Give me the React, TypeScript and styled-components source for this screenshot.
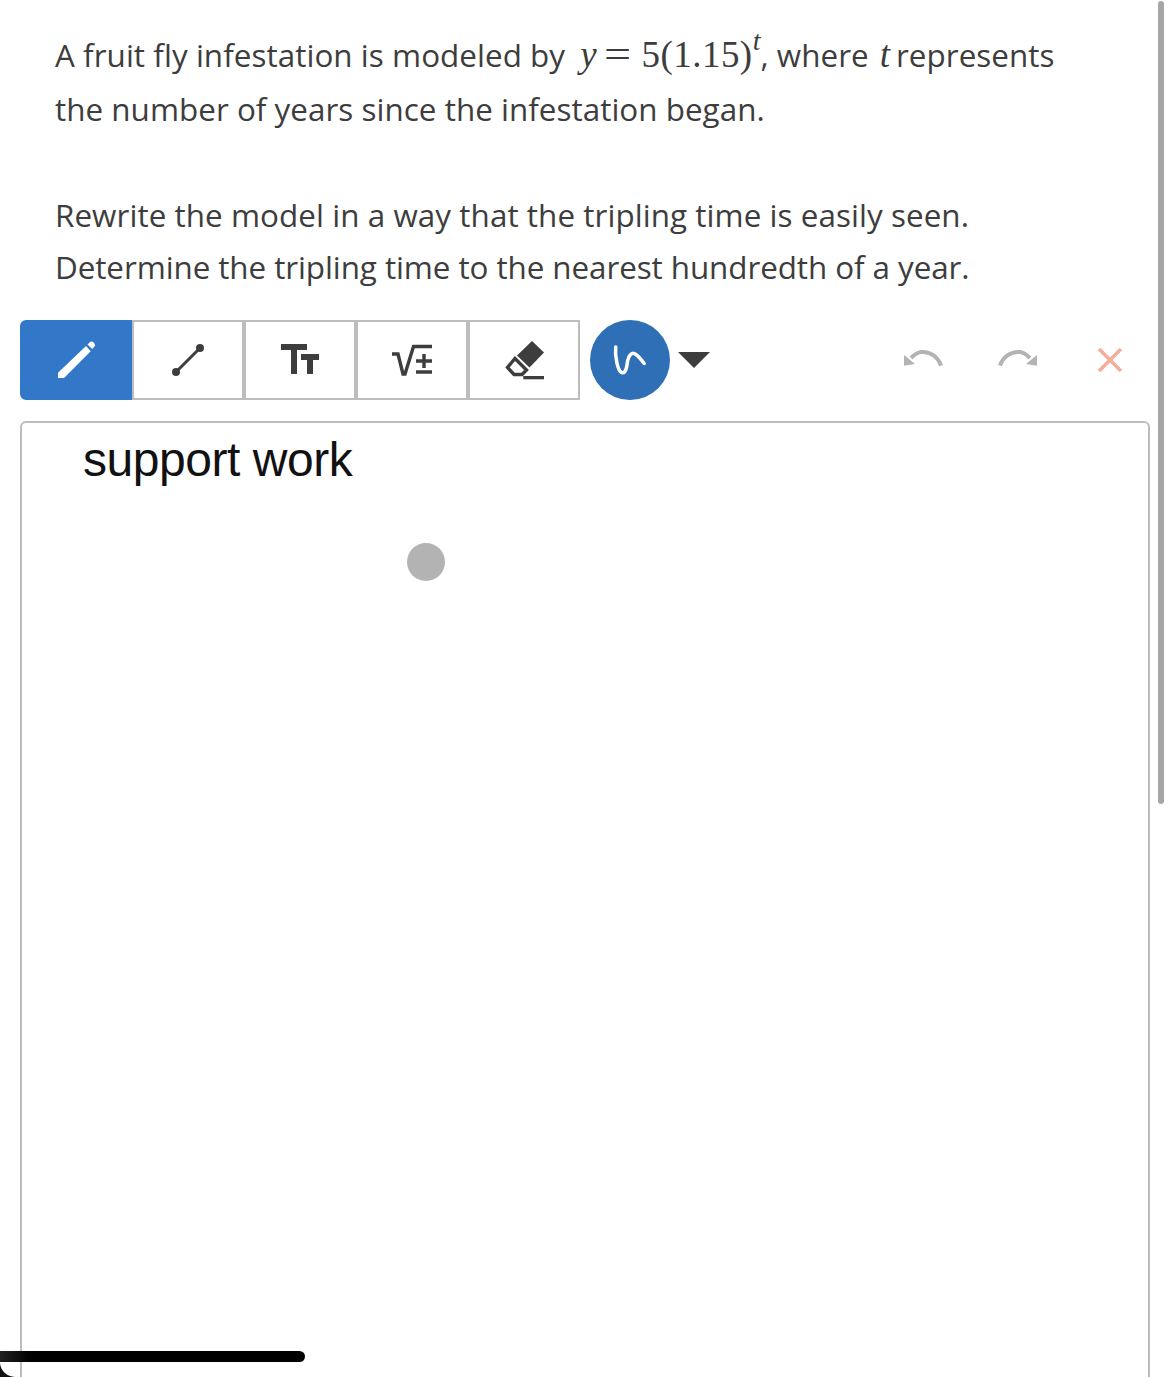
import React from "react";
import styled, { createGlobalStyle } from "styled-components";

const GlobalStyle = createGlobalStyle`
  html, body {
    margin: 0;
    padding: 0;
    background: #fff;
  }
`;

export default function App() {
  return (
    <Page>
      <GlobalStyle />
      <Question>
        <TextLine $height={54} $tracking={0.05}>
          A fruit fly infestation is modeled by
          <MathText $gapLeft={15}>
            <i>y</i>
            <MathEquals>=</MathEquals>
            <MathNumber>5(1.15)</MathNumber>
            <Sup>t</Sup>
          </MathText>
          , where
          <MathText $gapLeft={11}>
            <i>t</i>
          </MathText>
          <AfterMath>represents</AfterMath>
        </TextLine>
        <TextLine $height={54} $tracking={0.03}>
          the number of years since the infestation began.
        </TextLine>
      </Question>
      <Prompt>
        <TextLine $height={52} $tracking={0.06}>
          Rewrite the model in a way that the tripling time is easily seen.
        </TextLine>
        <TextLine $height={52} $tracking={-0.08}>
          Determine the tripling time to the nearest hundredth of a year.
        </TextLine>
      </Prompt>

      <Toolbar>
        <ToolGroup>
          <ToolButton $active>
            <ToolIcon viewBox="0 0 40 40">
              <path d="M2 32.700V38h6l26.700-26.700L30 6z" fill="#fff" />
              <path d="M31.500 4.500l1.800-1.800a3.200 3.200 0 0 1 4.600 4.500L36.200 9z" fill="#fff" />
            </ToolIcon>
          </ToolButton>
          <ToolButton>
            <ToolIcon viewBox="0 0 40 40">
              <path d="M8 32L32 8" stroke="#3d3d3d" strokeWidth="3" />
              <circle cx="8" cy="32" r="4" fill="#3d3d3d" />
              <circle cx="32" cy="8" r="4" fill="#3d3d3d" />
            </ToolIcon>
          </ToolButton>
          <ToolButton>
            <ToolIcon viewBox="0 0 40 40" fill="#3d3d3d">
              <rect x="1" y="4" width="26" height="6" />
              <rect x="11" y="4" width="6" height="30" />
              <rect x="21" y="14" width="18" height="6" />
              <rect x="27" y="14" width="6" height="20" />
            </ToolIcon>
          </ToolButton>
          <ToolButton>
            <ToolIcon viewBox="0 0 40 40">
              <path d="M0 14h6l5 20h2L21.500 6.500H40" fill="none" stroke="#3d3d3d" strokeWidth="3.400" />
              <path d="M24 21h16M32 14v14M24 32h16" fill="none" stroke="#3d3d3d" strokeWidth="3.400" />
            </ToolIcon>
          </ToolButton>
          <ToolButton>
            <ToolIcon viewBox="0 0 40 40">
              <path d="M28 1l12 11.500-14.500 15L13 15.500z" fill="#3d3d3d" />
              <path d="M11 18.500l11.500 11.500-4.500 4.500h-8L3.500 27.500z" fill="none" stroke="#3d3d3d" strokeWidth="3.400" />
              <rect x="19.300" y="36" width="20.700" height="3.300" fill="#3d3d3d" />
            </ToolIcon>
          </ToolButton>
        </ToolGroup>

        <PenCircle>
          <svg width="80" height="80" viewBox="0 0 80 80">
            <path
              d="M25.700 27c-1 9 2 24 6 25.500s5-5 6-12c1-5 4-8 6.500-7 3 1 7 6 10 10"
              fill="none"
              stroke="#fff"
              strokeWidth="3.500"
              strokeLinecap="round"
            />
          </svg>
        </PenCircle>
        <Caret />

        <HistoryGroup>
          <UndoIcon viewBox="0 0 40 24">
            <path d="M37 17.700C34 9 26 3 17 4c-4 .5-7 3-10 6" fill="none" stroke="#b3b3b3" strokeWidth="4" />
            <path d="M0 17.700V7l11 9z" fill="#b3b3b3" />
          </UndoIcon>
          <RedoIcon viewBox="0 0 40 24">
            <path d="M3 17.700C6 9 14 3 23 4c4 .5 7 3 10 6" fill="none" stroke="#b3b3b3" strokeWidth="4" />
            <path d="M40 17.700V7l-11 9z" fill="#b3b3b3" />
          </RedoIcon>
          <CloseIcon viewBox="0 0 26 26">
            <path d="M2 2l22 22M24 2L2 24" stroke="#f4ae9c" strokeWidth="3.600" />
          </CloseIcon>
        </HistoryGroup>
      </Toolbar>

      <Canvas>
        <HandText>support work</HandText>
        <PenDot />
      </Canvas>

      <Scrollbar />
      <HomeIndicator />
      <CornerMask>
        <CornerCutout />
      </CornerMask>
    </Page>
  );
}

// page

const Page = styled.div`
  position: relative;
  width: 1170px;
  height: 1377px;
  overflow: hidden;
  background: #fff;
  color: #3d3d3d;
  font-family: "Open Sans", sans-serif;
  font-size: 31.4px;
`;

const Question = styled.div`
  padding: 28px 0 0 55px;
`;

const Prompt = styled.div`
  padding: 53px 0 0 55px;
`;

const TextLine = styled.div<{ $height: number; $tracking: number }>`
  height: ${({ $height }) => $height}px;
  line-height: ${({ $height }) => $height}px;
  letter-spacing: ${({ $tracking }) => $tracking}px;
  white-space: nowrap;
`;

const MathText = styled.span<{ $gapLeft: number }>`
  margin-left: ${({ $gapLeft }) => $gapLeft}px;
  font-family: "Liberation Serif", serif;
  font-size: 37px;
  letter-spacing: 0;
`;

const MathEquals = styled.span`
  display: inline-block;
  width: 23px;
  margin: 0 13px 0 9px;
  text-align: center;
  transform: scaleX(1.3);
`;

const MathNumber = styled.span`
  letter-spacing: 0.45px;
`;

const Sup = styled.i`
  font-size: 28px;
  vertical-align: 17px;
  line-height: 0;
`;

const AfterMath = styled.span`
  margin-left: 6px;
`;

// toolbar

const Toolbar = styled.div`
  display: flex;
  align-items: center;
  height: 80px;
  margin-top: 27px;
  padding-left: 20px;
`;

const ToolGroup = styled.div`
  display: flex;
`;

const ToolButton = styled.div<{ $active?: boolean }>`
  display: flex;
  align-items: center;
  justify-content: center;
  box-sizing: border-box;
  width: 112px;
  height: 80px;
  border: 2px solid ${({ $active }) => ($active ? "#3277c8" : "#bdbdbd")};
  background: ${({ $active }) => ($active ? "#3277c8" : "#fff")};
  border-radius: ${({ $active }) => ($active ? "6px 0 0 6px" : "0")};
`;

const ToolIcon = styled.svg`
  display: block;
  width: 40px;
  height: 40px;
`;

const PenCircle = styled.div`
  width: 80px;
  height: 80px;
  margin-left: 10px;
  border-radius: 50%;
  background: #2e6fb5;

  svg {
    display: block;
  }
`;

const Caret = styled.div`
  width: 0;
  height: 0;
  margin-left: 8px;
  border-left: 16px solid transparent;
  border-right: 16px solid transparent;
  border-top: 16px solid #3d3d3d;
`;

const HistoryGroup = styled.div`
  display: flex;
  align-items: center;
  margin-left: 194px;
`;

const UndoIcon = styled.svg`
  display: block;
  width: 40px;
  height: 24px;
`;

const RedoIcon = styled(UndoIcon)`
  margin-left: 53px;
`;

const CloseIcon = styled.svg`
  display: block;
  width: 26px;
  height: 26px;
  margin-left: 60px;
`;

// drawing area

const Canvas = styled.div`
  position: relative;
  box-sizing: border-box;
  width: 1130px;
  height: 1000px;
  margin: 21px 0 0 20px;
  border: 2px solid #bdbdbd;
  border-radius: 6px;
`;

const HandText = styled.div`
  position: absolute;
  left: 61px;
  top: 9px;
  font-family: "Liberation Sans", sans-serif;
  font-size: 48px;
  line-height: 56px;
  letter-spacing: -0.45px;
  color: #111;
`;

const PenDot = styled.div`
  position: absolute;
  left: 385px;
  top: 120px;
  width: 38px;
  height: 38px;
  border-radius: 50%;
  background: #b3b3b3;
`;

// overlays from the device capture

const Scrollbar = styled.div`
  position: absolute;
  left: 1158px;
  top: 1px;
  width: 6px;
  height: 803px;
  border-radius: 3px;
  background: #a6a6a6;
`;

const HomeIndicator = styled.div`
  position: absolute;
  left: 0;
  top: 1351px;
  width: 305px;
  height: 11px;
  border-radius: 0 6px 6px 0;
  background: linear-gradient(90deg, #222 0, #000 30px);
`;

const CornerMask = styled.div`
  position: absolute;
  left: 0;
  top: 1362px;
  width: 15px;
  height: 15px;
  background: #111;
`;

const CornerCutout = styled.div`
  width: 15px;
  height: 15px;
  border-bottom-left-radius: 15px;
  background: #fff;
`;
